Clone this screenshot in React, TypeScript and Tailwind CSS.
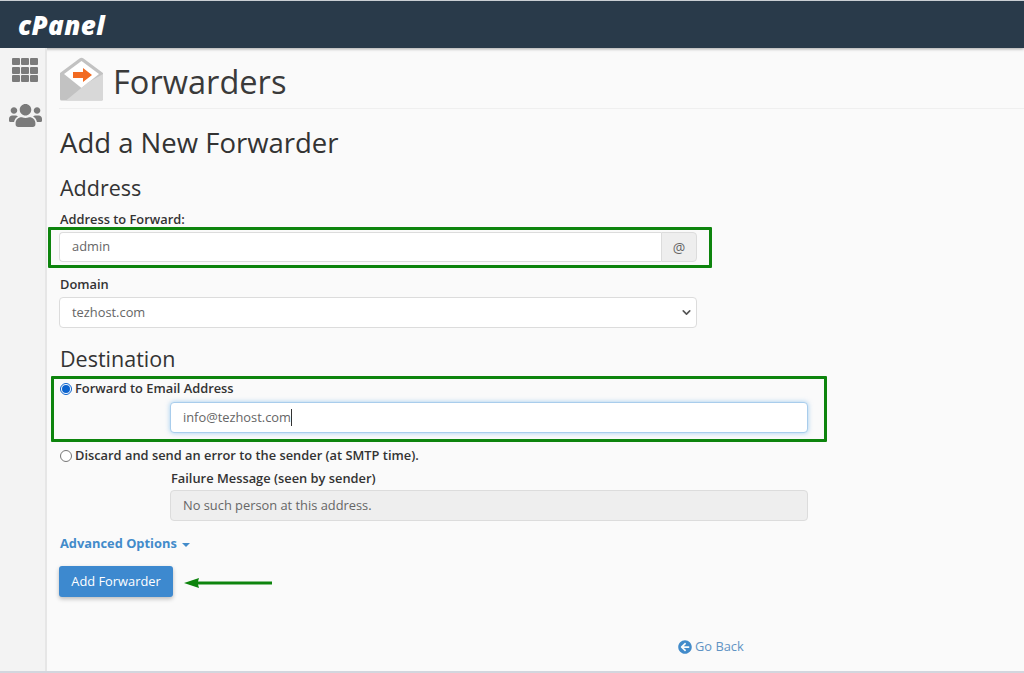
import { ChevronDown } from 'lucide-react';
import { FaArrowCircleLeft, FaUsers } from 'react-icons/fa';

function GridIcon() {
  return (
    <div className="grid w-[26px] grid-cols-3 gap-[1.5px]">
      {Array.from({ length: 9 }).map((_, i) => (
        <div key={i} className="h-[7px] rounded-[1px] bg-[#7b7b7b]" />
      ))}
    </div>
  );
}

function EnvelopeIcon() {
  return (
    <svg width="45" height="44" viewBox="0 0 45 44" className="shrink-0">
      <path d="M1 16 L20.5 1.5 Q22.5 0 24.5 1.5 L44 16 L44 42 Q44 43.5 42.5 43.5 L2.5 43.5 Q1 43.5 1 42 Z" fill="#c2c2c2" />
      <path d="M5 17 L22.5 4 L40 17 L22.5 31 Z" fill="#ffffff" />
      <path d="M7 43.5 L29 25.5 L44 17 L44 42 Q44 43.5 42.5 43.5 Z" fill="#d8d8d8" />
      <path d="M14 15 H24 V11 L33 18 L24 25 V21 H14 Z" fill="#f26a21" />
    </svg>
  );
}

function Radio({ checked }: { checked?: boolean }) {
  return (
    <span
      className={`flex h-[12px] w-[12px] shrink-0 items-center justify-center rounded-full border bg-white ${
        checked ? 'border-[#0b63ce]' : 'border-[#767676]'
      }`}
    >
      {checked && <span className="h-[8px] w-[8px] rounded-full bg-[#0b63ce]" />}
    </span>
  );
}

const fieldClass =
  'flex h-[31px] items-center rounded-[4px] border border-[#dcdcdc] bg-white px-3 text-[12.85px] text-[#666666]';

export default function App() {
  return (
    <div
      className="relative flex h-[673px] w-[1024px] flex-col overflow-hidden bg-[#fafafa] text-[#333333]"
      style={{ fontFamily: '"Open Sans", sans-serif' }}
    >
      {/* Top bar */}
      <header className="flex h-[48px] shrink-0 items-center border-t border-t-[#c9ced3] bg-[#293a4a] pl-[18px] shadow-[0_1px_3px_rgba(0,0,0,0.35)]">
        <span className="text-[26px] font-extrabold italic leading-none tracking-[0.4px] text-white">cPanel</span>
      </header>

      <div className="flex min-h-0 flex-1 border-b-2 border-b-[#d3d6de]">
        {/* Sidebar */}
        <aside className="flex w-[47px] shrink-0 flex-col items-center border-r-2 border-r-[#e6e6e6] bg-[#f3f3f3] pl-[5px] pt-[10px]">
          <GridIcon />
          <FaUsers className="mt-[17px] text-[#7b7b7b]" size={33} />
        </aside>

        {/* Main */}
        <main className="min-w-0 flex-1 pl-[12px]">
          <div className="flex h-[61px] items-start gap-[9px] border-b border-b-[#efefef] pt-[9px]">
            <EnvelopeIcon />
            <h1 className="mt-[3px] text-[32.6px] leading-[44px] text-[#3a3a3a]">Forwarders</h1>
          </div>

          <h2 className="ml-px mt-[16px] text-[27.5px] leading-[36px] text-[#333333]">Add a New Forwarder</h2>

          <h3 className="ml-px mt-[13px] text-[21.5px] leading-[28px]">Address</h3>
          <label className="ml-px mt-[8px] block text-[12.85px] font-semibold leading-[18px]">Address to Forward:</label>
          <div className="mt-[4px] flex w-[638px]">
            <div className={`${fieldClass} !h-[30px] flex-1 rounded-r-none border-r-0`}>admin</div>
            <div className="flex h-[30px] w-[36px] items-center justify-center rounded-r-[4px] border border-[#dcdcdc] bg-[#eeeeee] text-[14px] text-[#666666]">
              @
            </div>
          </div>

          <label className="ml-px mt-[13px] block text-[12.85px] font-semibold leading-[18px]">Domain</label>
          <div className={`${fieldClass} mt-[4px] w-[638px] justify-between pr-[3px]`}>
            <span>tezhost.com</span>
            <ChevronDown size={13} strokeWidth={3} className="text-[#555555]" />
          </div>

          <h3 className="ml-px mt-[17px] text-[21.5px] leading-[28px]">Destination</h3>
          <div className="mt-[7px] flex h-[18px] items-center gap-[3px] pl-[1px] text-[12.85px] font-semibold">
            <Radio checked />
            <span>Forward to Email Address</span>
          </div>
          <div className="ml-[111px] mt-[4px] flex h-[31px] w-[638px] items-center rounded-[4px] border border-[#a9cdec] bg-white px-3 text-[12.85px] text-[#666666] shadow-[0_0_5px_rgba(102,175,233,0.6)]">
            info@tezhost.com
            <span className="h-[17px] w-px bg-[#333333]" />
          </div>

          <div className="mt-[14px] flex h-[18px] items-center gap-[3px] pl-[1px] text-[12.85px] font-semibold">
            <Radio />
            <span>Discard and send an error to the sender (at SMTP time).</span>
          </div>
          <label className="ml-[112px] mt-[4px] block text-[12.85px] font-semibold leading-[18px]">
            Failure Message (seen by sender)
          </label>
          <div className="ml-[111px] mt-[3px] flex h-[31px] w-[638px] items-center rounded-[4px] border border-[#dcdcdc] bg-[#eeeeee] px-3 text-[12.85px] text-[#666666]">
            No such person at this address.
          </div>

          <div className="ml-px mt-[14px] flex h-[18px] items-center gap-[5px] text-[12.85px] font-bold text-[#428bca]">
            <span>Advanced Options</span>
            <span className="mt-[2px] h-0 w-0 border-x-[4px] border-t-[4px] border-x-transparent border-t-[#428bca]" />
          </div>

          <button className="mt-[13px] block h-[31px] w-[114px] rounded-[3px] bg-[#3d89cf] text-[12.85px] text-white shadow-[0_2px_4px_rgba(0,0,0,0.25)]">
            Add Forwarder
          </button>

          <div className="ml-[619px] mt-[41px] flex h-[18px] items-center gap-[3px] text-[12.85px] text-[#5f93c4]">
            <FaArrowCircleLeft className="text-[#428bca]" size={14} />
            <span>Go Back</span>
          </div>
        </main>
      </div>

      {/* Annotations drawn over the page */}
      <div className="absolute left-[48px] top-[227px] h-[41px] w-[664px] rounded-[1px] border-[3px] border-[#0d840d]" />
      <div className="absolute left-[51px] top-[376px] h-[66px] w-[776px] rounded-[1px] border-[3px] border-[#0d840d]" />
      <svg className="absolute left-[183px] top-[576px]" width="90" height="14" viewBox="0 0 90 14">
        <path d="M1 7 L16 2 L15 5.5 L89 5.5 L89 8.5 L15 8.5 L16 12 Z" fill="#0d840d" />
      </svg>
    </div>
  );
}
